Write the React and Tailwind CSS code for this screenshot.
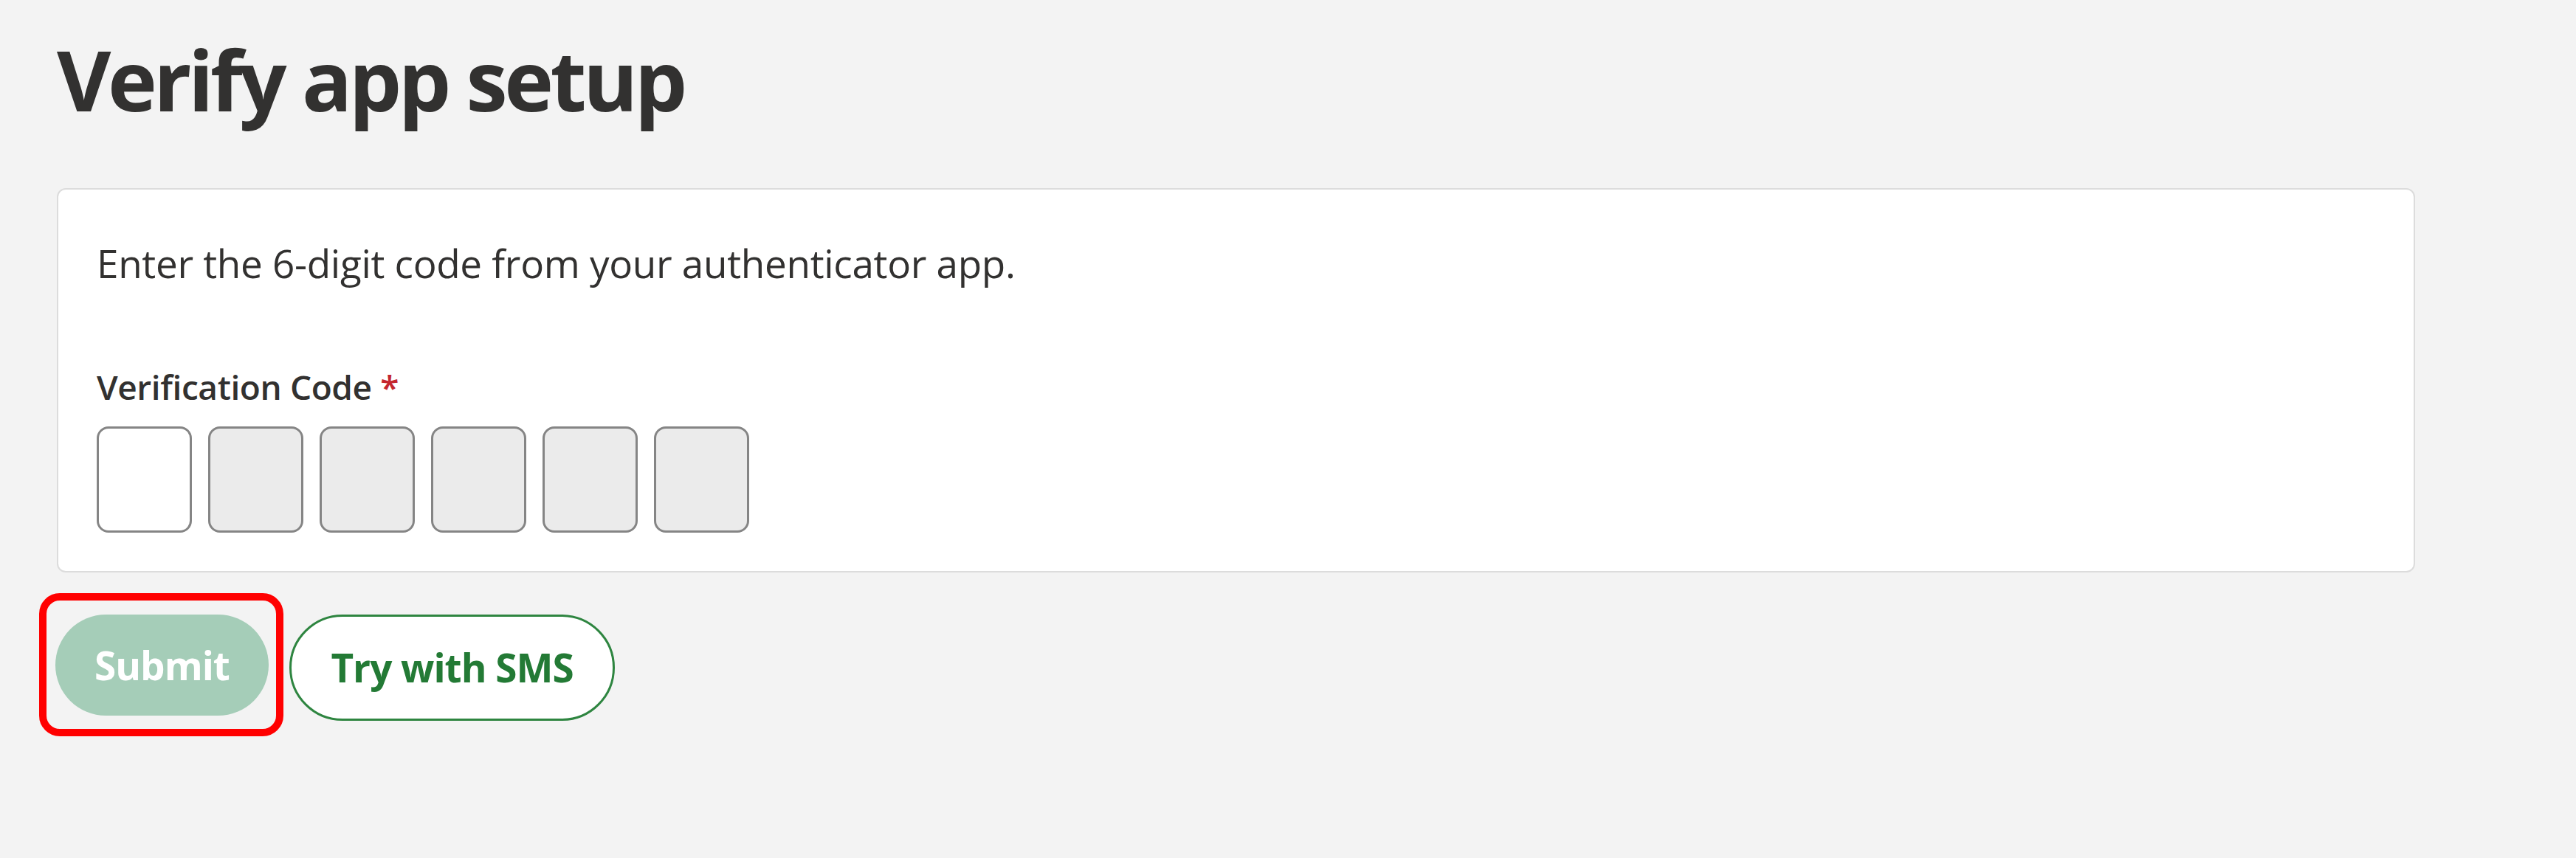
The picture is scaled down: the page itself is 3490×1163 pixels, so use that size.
import React from "react";

export default function App() {
  const boxes = [0, 1, 2, 3, 4, 5];
  return (
    <div className="w-full h-[1163px] bg-[#f3f3f3] text-[#323130] font-['Open_Sans',sans-serif] overflow-hidden">
      <div className="pl-[77px] pr-[218px] pt-[37px]">
        <h1 className="text-[113px] leading-[140px] font-bold tracking-[-4.5px] m-0">
          Verify app setup
        </h1>
        <div className="mt-[78px] bg-white border-2 border-[#dcdcdc] rounded-[12px] pl-[52px] pt-[64px] pb-[52px]">
          <p className="text-[53px] leading-[72px] m-0 tracking-[-0.3px]">
            Enter the 6-digit code from your authenticator app.
          </p>
          <label className="block mt-[101px] text-[46px] leading-[60px] font-semibold tracking-[-0.4px]">
            Verification Code <span className="text-[#c4262e]">*</span>
          </label>
          <div className="mt-[24px] flex gap-[22px]">
            {boxes.map((i) => (
              <div
                key={i}
                className={
                  i === 0
                    ? "w-[129px] h-[144px] border-[3px] border-[#858585] rounded-[16px] bg-white"
                    : "w-[129px] h-[144px] border-[3px] border-[#858585] rounded-[16px] bg-[#ebebeb]"
                }
              />
            ))}
          </div>
        </div>
        <div className="mt-[57px] -ml-[2px] flex items-start gap-[28px]">
          <div className="relative">
            <button className="w-[289px] h-[137px] rounded-full bg-[#a5cdb8] text-white text-[53px] font-bold tracking-[-1px] flex items-center justify-center">
              Submit
            </button>
            <div className="absolute -left-[22px] -top-[29px] w-[331px] h-[194px] border-[10px] border-[#ff0000] rounded-[28px] pointer-events-none" />
          </div>
          <button className="w-[441px] h-[144px] rounded-full bg-white border-[3px] border-[#2e8540] text-[#237a35] text-[53px] font-bold tracking-[-1px] flex items-center justify-center">
            Try with SMS
          </button>
        </div>
      </div>
    </div>
  );
}
